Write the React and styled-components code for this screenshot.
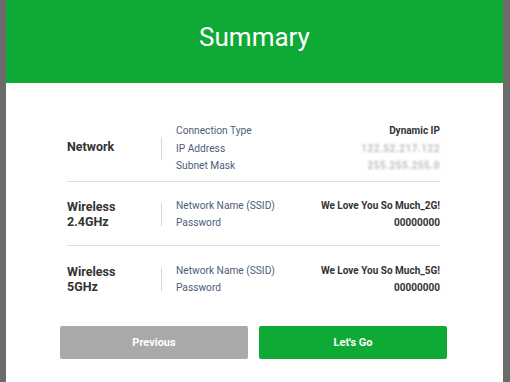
import React from "react";
import styled, { createGlobalStyle } from "styled-components";

const GlobalStyle = createGlobalStyle`
  html, body {
    margin: 0;
    padding: 0;
    background: #6b6b6b;
    font-family: Roboto, "Liberation Sans", sans-serif;
  }
`;

const Frame = styled.div`
  width: 510px;
  height: 382px;
  box-sizing: border-box;
  padding: 0 7px 0 6px;
  background: #6b6b6b;
  overflow: hidden;
`;

const Card = styled.div`
  height: 100%;
  background: #ffffff;
  display: flex;
  flex-direction: column;
`;

const Header = styled.div`
  height: 83px;
  background: #0eaa35;
  color: #ffffff;
  display: flex;
  align-items: center;
  justify-content: center;
  font-size: 26px;
  font-weight: 400;
  padding-bottom: 10px;
  box-sizing: border-box;
`;

const Rows = styled.div`
  padding: 39px 63px 0 61px;
`;

const Row = styled.div`
  display: flex;
  align-items: center;
  padding: ${(p) => p.$pad};
  border-bottom: ${(p) => (p.$last ? "none" : "1px solid #dcdcdc")};
`;

const Section = styled.div`
  width: 94px;
  font-size: 12.5px;
  font-weight: 700;
  line-height: 15px;
  color: #333333;
  margin-top: ${(p) => p.$lift || 0};
`;

const Divider = styled.div`
  width: 1px;
  height: 23px;
  background: #d6d6d6;
  margin-right: 14px;
`;

const Fields = styled.div`
  flex: 1;
  display: flex;
  flex-direction: column;
`;

const Field = styled.div`
  display: flex;
  justify-content: space-between;
  align-items: center;
  height: 17.5px;
`;

const Label = styled.span`
  font-size: 10.2px;
  color: #4c5d7c;
`;

const Value = styled.span`
  font-size: 10px;
  font-weight: 700;
  color: #333333;
`;

const Hidden = styled.span`
  font-size: 10px;
  font-weight: 700;
  color: #444444;
  filter: blur(0.8px);
  opacity: 0.35;
  letter-spacing: 0.5px;
`;

const Buttons = styled.div`
  display: flex;
  gap: 11px;
  padding: 15px 56px 0 54px;
`;

const Button = styled.button`
  flex: 1;
  height: 33px;
  border: none;
  border-radius: 2px;
  background: ${(p) => (p.$primary ? "#0eaa35" : "#a9a9a9")};
  color: #ffffff;
  font-family: Roboto, "Liberation Sans", sans-serif;
  font-size: 11px;
  font-weight: 700;
  cursor: pointer;
`;

const rows = [
  {
    name: ["Network"],
    pad: "0 0 6px 0",
    lift: "-4px",
    fields: [
      { label: "Connection Type", value: "Dynamic IP" },
      { label: "IP Address", value: "122.52.217.122", hidden: true },
      { label: "Subnet Mask", value: "255.255.255.0", hidden: true },
    ],
  },
  {
    name: ["Wireless", "2.4GHz"],
    pad: "15px 0 13px 0",
    fields: [
      { label: "Network Name (SSID)", value: "We Love You So Much_2G!" },
      { label: "Password", value: "00000000" },
    ],
  },
  {
    name: ["Wireless", "5GHz"],
    pad: "16px 0 14px 0",
    last: true,
    fields: [
      { label: "Network Name (SSID)", value: "We Love You So Much_5G!" },
      { label: "Password", value: "00000000" },
    ],
  },
];

export default function App() {
  return (
    <Frame>
      <GlobalStyle />
      <Card>
        <Header>Summary</Header>
        <Rows>
          {rows.map((row, i) => (
            <Row key={i} $pad={row.pad} $last={row.last}>
              <Section $lift={row.lift}>
                {row.name.map((line) => (
                  <div key={line}>{line}</div>
                ))}
              </Section>
              <Divider />
              <Fields>
                {row.fields.map((f) => (
                  <Field key={f.label}>
                    <Label>{f.label}</Label>
                    {f.hidden ? <Hidden>{f.value}</Hidden> : <Value>{f.value}</Value>}
                  </Field>
                ))}
              </Fields>
            </Row>
          ))}
        </Rows>
        <Buttons>
          <Button>Previous</Button>
          <Button $primary>Let's Go</Button>
        </Buttons>
      </Card>
    </Frame>
  );
}
